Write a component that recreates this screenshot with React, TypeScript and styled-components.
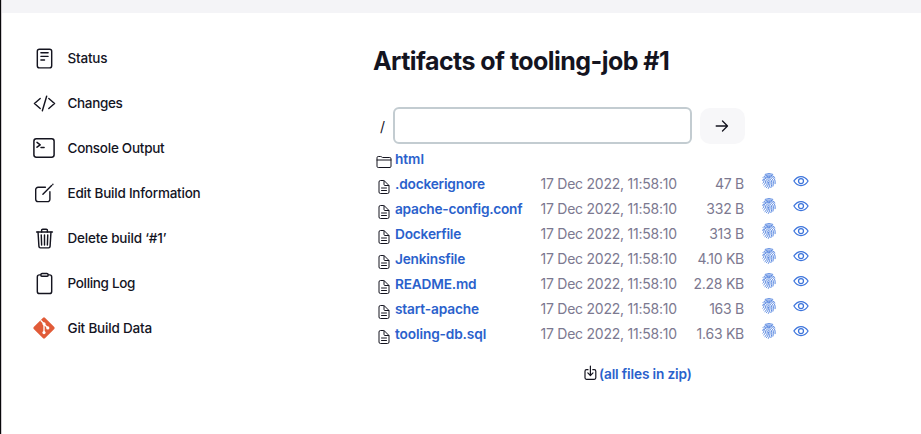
import React from "react";
import styled, { createGlobalStyle } from "styled-components";
import {
  IoReaderOutline,
  IoCodeSlashOutline,
  IoTrashOutline,
  IoClipboardOutline,
  IoFolderOutline,
  IoDocumentTextOutline,
  IoEyeOutline,
} from "react-icons/io5";

const GlobalStyle = createGlobalStyle`
  *, *::before, *::after { box-sizing: border-box; }
  html, body { margin: 0; overflow: hidden; background: #fff; }
  body { font-family: Inter, "Liberation Sans", sans-serif; color: #14141f; }
`;

const Window = styled.div`
  display: flex;
  width: 921px;
  height: 434px;
`;

const DesktopEdge = styled.div`
  flex: 0 0 2px;
  border-right: 1px solid #d0ccd0;
  background: #08080a;
`;

const Page = styled.div`
  flex: 1;
  display: flex;
  flex-direction: column;
  min-width: 0;
`;

const Breadcrumbs = styled.div`
  flex: 0 0 13px;
  background: #f4f4f7;
`;

const Body = styled.div`
  flex: 1;
  display: grid;
  grid-template-columns: 371px 1fr;
`;

const Tasks = styled.nav`
  display: flex;
  flex-direction: column;
  padding: 22.5px 0 0 30px;
`;

const Task = styled.a`
  display: flex;
  align-items: center;
  height: 45px;
  gap: 11.5px;
  font-size: 13.5px;
  font-weight: 500;
  white-space: nowrap;
`;

const TaskIcon = styled.span`
  display: flex;
  justify-content: center;
  width: 24px;
  svg { display: block; overflow: visible; }
`;

const TaskLabel = styled.span<{ $spacing: number }>`
  line-height: 17px;
  letter-spacing: ${(p) => p.$spacing}px;
`;

const Main = styled.main`
  display: flex;
  flex-direction: column;
  padding-top: 33px;
`;

const Title = styled.h1`
  margin: 0;
  height: 30px;
  font-size: 25px;
  line-height: 30px;
  font-weight: 700;
  letter-spacing: -0.55px;
  white-space: nowrap;
`;

const PathForm = styled.form`
  display: flex;
  align-items: center;
  height: 37px;
  margin: 31px 0 0 7px;
`;

const Slash = styled.span`
  width: 13px;
  padding-top: 2px;
  font-size: 14px;
`;

const PathInput = styled.input`
  width: 299px;
  height: 37px;
  border: 2px solid #c3ccd1;
  border-radius: 6px;
  background: #fff;
  outline: none;
`;

const GoButton = styled.button`
  display: flex;
  align-items: center;
  justify-content: center;
  width: 45px;
  height: 36px;
  margin-left: 8px;
  padding: 0 1px 0 0;
  border: 0;
  border-radius: 10px;
  color: #14141f;
  background: #f7f7f9;
`;

const FileList = styled.div`
  display: flex;
  flex-direction: column;
  margin-top: 2px;
`;

const FileRow = styled.div`
  display: grid;
  grid-template-columns: 22px 145.5px 136.5px 67px 33px 32px;
  align-items: center;
  height: 25px;
  font-size: 14px;
  line-height: 25px;
  white-space: nowrap;
`;

const FileIcon = styled.span`
  display: flex;
  padding: 6px 0 0 2.5px;
  svg { display: block; }
`;

const FileName = styled.a<{ $spacing: number }>`
  padding-top: 2px;
  color: #2a61cc;
  font-size: 13.7px;
  font-weight: 600;
  line-height: 23px;
  letter-spacing: ${(p) => p.$spacing}px;
`;

const FileDate = styled.span`
  color: #7c7990;
  letter-spacing: -0.24px;
`;

const FileSize = styled.span`
  color: #7c7990;
  text-align: right;
  letter-spacing: -0.26px;
`;

const RowAction = styled.a`
  display: flex;
  justify-content: flex-end;
  padding-bottom: 6px;
  color: #3c74dc;
  svg { display: block; overflow: visible; }
`;

const BoldEye = styled(IoEyeOutline)`
  path, circle { stroke-width: 40px; }
`;

const ZipLine = styled.div`
  display: flex;
  align-items: center;
  height: 20px;
  margin: 17px 0 0 211px;
  gap: 2px;
  font-size: 14px;
`;

const stroke = {
  fill: "none",
  stroke: "currentColor",
  strokeLinecap: "round" as const,
  strokeLinejoin: "round" as const,
};

const TerminalIcon = () => (
  <svg width="22" height="20" viewBox="0 0 22 20" {...stroke} strokeWidth="1.5">
    <rect x="0.9" y="0.8" width="20.2" height="18.4" rx="2.4" />
    <path d="M4 4.4 7.2 6.8 4 9.2M8 9.4h3.1" />
  </svg>
);

const EditIcon = () => (
  <svg width="20" height="20" viewBox="0 0 20 20" {...stroke} strokeWidth="1.4">
    <path d="M11.4 4.2H4.1a2.4 2.4 0 0 0-2.4 2.4v9.6a2.4 2.4 0 0 0 2.4 2.4h9.4a2.4 2.4 0 0 0 2.4-2.4V8.8" />
    <path d="M8.9 11.3 17.6 2.6M18.8 1.4l.1-.1" />
  </svg>
);

const GitIcon = () => (
  <svg width="24" height="24" viewBox="0 0 24 24">
    <rect x="4.1" y="4.1" width="15.8" height="15.8" rx="1.3" fill="#e15b38" transform="rotate(45 12 12)" />
    <path d="M8.6 4.2 12 7.7v8.8M12 8l3.7 3.8" fill="none" stroke="#fff" strokeWidth="1.3" />
    <circle cx="12" cy="7.8" r="1.6" fill="#fff" />
    <circle cx="12" cy="16.6" r="1.6" fill="#fff" />
    <circle cx="15.8" cy="11.9" r="1.6" fill="#fff" />
  </svg>
);

const FingerprintIcon = () => (
  <svg width="16" height="16" viewBox="0 0 16 16" {...stroke} strokeWidth="0.85">
    <path d="M4.2 1.3Q8 -.3 11.8 1.3" />
    <path d="M2 4.5C4.4 1.2 11.2 1 14 4.7" />
    <path d="M1.7 7.4C3.3 2.4 11.6 1.6 13.8 6.9c.4 1.2.4 2.6.3 3.8" />
    <path d="M1.9 10.2c1.2-.9.7-2.1 1.4-3.3C5 3.4 10.8 3.6 12.1 7.6c.5 1.7.3 3.6-.2 5.6" />
    <path d="M2.7 12c2-1 1.5-2.8 2.1-4.2 1-2.6 4.8-2.6 5.7.2.6 2.1.2 4.5-.6 6.6" />
    <path d="M3.9 13.6c2.2-1.2 2.3-3.2 2.3-4.7.2-2 2.6-2 2.8 0 .2 2.3-.4 4.6-1.6 6.5" />
    <path d="M7.6 9c.1 2.1-.6 4.2-2.1 5.6" />
  </svg>
);

const ArrowIcon = () => (
  <svg width="14" height="12" viewBox="0 0 14 12" {...stroke} strokeWidth="1.3">
    <path d="M1.2 6h11.2M7.5 1 12.5 6 7.5 11" />
  </svg>
);

const DownloadIcon = () => (
  <svg width="13" height="16" viewBox="0 0 13 16" {...stroke} strokeWidth="1.2">
    <path d="M4 4.7H2.5A1.5 1.5 0 0 0 1 6.2v6.6a1.5 1.5 0 0 0 1.5 1.5h7.8a1.5 1.5 0 0 0 1.5-1.5V6.2a1.5 1.5 0 0 0-1.5-1.5H8.8" />
    <path d="M6.4 1v9.3M3.8 7.9l2.6 2.6L9 7.9" />
  </svg>
);

const tasks = [
  { label: "Status", icon: <IoReaderOutline size={23} />, spacing: -0.2 },
  { label: "Changes", icon: <IoCodeSlashOutline size={23} />, spacing: -0.34 },
  { label: "Console Output", icon: <TerminalIcon />, spacing: -0.27 },
  { label: "Edit Build Information", icon: <EditIcon />, spacing: -0.22 },
  { label: "Delete build ‘#1’", icon: <IoTrashOutline size={23} />, spacing: -0.19 },
  { label: "Polling Log", icon: <IoClipboardOutline size={23} />, spacing: -0.33 },
  { label: "Git Build Data", icon: <GitIcon />, spacing: -0.2 },
];

const files = [
  { name: ".dockerignore", size: "47 B", spacing: -0.2 },
  { name: "apache-config.conf", size: "332 B", spacing: -0.25 },
  { name: "Dockerfile", size: "313 B", spacing: -0.2 },
  { name: "Jenkinsfile", size: "4.10 KB", spacing: -0.21 },
  { name: "README.md", size: "2.28 KB", spacing: -0.2 },
  { name: "start-apache", size: "163 B", spacing: -0.15 },
  { name: "tooling-db.sql", size: "1.63 KB", spacing: -0.13 },
];

export default function App() {
  return (
    <>
      <GlobalStyle />
      <Window>
        <DesktopEdge />
        <Page>
          <Breadcrumbs />
          <Body>
            <Tasks>
              {tasks.map((t) => (
                <Task key={t.label}>
                  <TaskIcon>{t.icon}</TaskIcon>
                  <TaskLabel $spacing={t.spacing}>{t.label}</TaskLabel>
                </Task>
              ))}
            </Tasks>
            <Main>
              <Title>Artifacts of tooling-job #1</Title>
              <PathForm>
                <Slash>/</Slash>
                <PathInput aria-label="Path" />
                <GoButton type="button" aria-label="Go">
                  <ArrowIcon />
                </GoButton>
              </PathForm>
              <FileList>
                <FileRow>
                  <FileIcon><IoFolderOutline size={16} /></FileIcon>
                  <FileName $spacing={-0.05}>html</FileName>
                </FileRow>
                {files.map((f) => (
                  <FileRow key={f.name}>
                    <FileIcon><IoDocumentTextOutline size={16} /></FileIcon>
                    <FileName $spacing={f.spacing}>{f.name}</FileName>
                    <FileDate>17 Dec 2022, 11:58:10</FileDate>
                    <FileSize>{f.size}</FileSize>
                    <RowAction aria-label="Fingerprint"><FingerprintIcon /></RowAction>
                    <RowAction aria-label="View"><BoldEye size={16} /></RowAction>
                  </FileRow>
                ))}
              </FileList>
              <ZipLine>
                <DownloadIcon />
                <FileName $spacing={-0.15}>(all files in zip)</FileName>
              </ZipLine>
            </Main>
          </Body>
        </Page>
      </Window>
    </>
  );
}
